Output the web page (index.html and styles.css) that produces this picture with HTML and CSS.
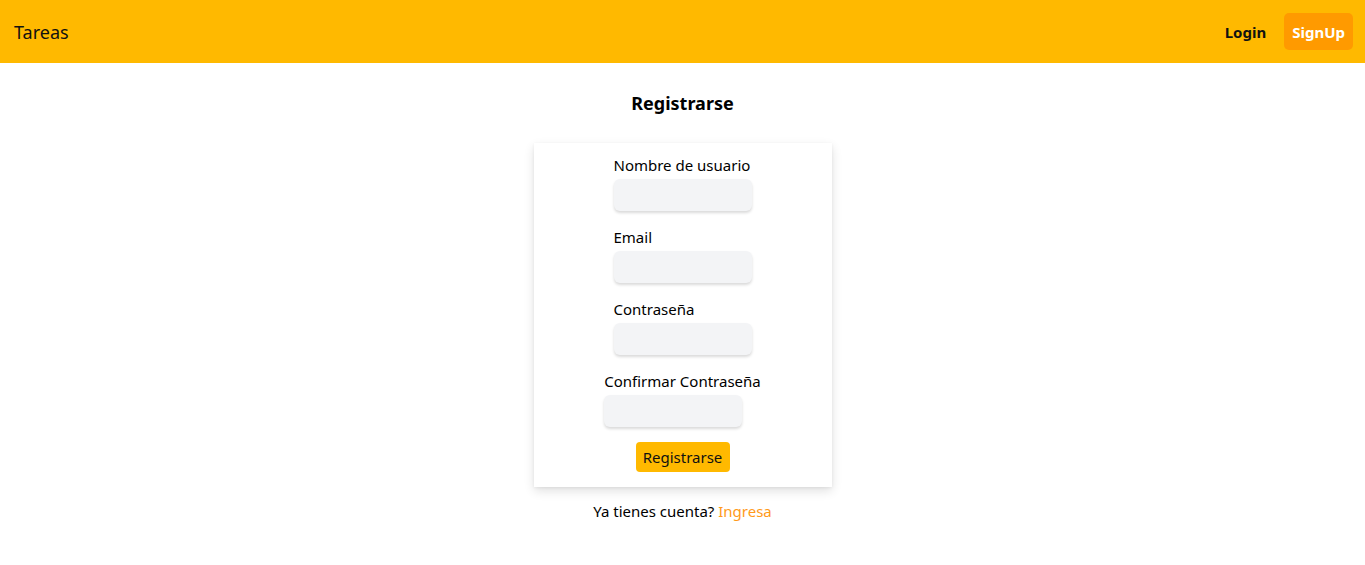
FILE: index.html
```html
<!DOCTYPE html>
<html lang="es">
<head>
<meta charset="utf-8">
<title>Tareas</title>
<link rel="stylesheet" href="styles.css">
</head>
<body>
<header class="navbar">
  <a class="brand" href="#">Tareas</a>
  <nav class="nav">
    <a class="nav-link" href="#">Login</a>
    <a class="nav-btn" href="#">SignUp</a>
  </nav>
</header>
<main class="main">
  <h1 class="title">Registrarse</h1>
  <form class="card">
    <div class="field">
      <label class="label">Nombre de usuario</label>
      <input class="input" type="text">
    </div>
    <div class="field">
      <label class="label">Email</label>
      <input class="input" type="email">
    </div>
    <div class="field">
      <label class="label">Contraseña</label>
      <input class="input" type="password">
    </div>
    <div class="field">
      <label class="label">Confirmar Contraseña</label>
      <input class="input" type="password">
    </div>
    <button class="submit" type="button">Registrarse</button>
  </form>
  <p class="footer-text">Ya tienes cuenta? <a class="link" href="#">Ingresa</a></p>
</main>
</body>
</html>
```
FILE: styles.css
```css
* { box-sizing: border-box; }
html, body { margin: 0; padding: 0; }
body {
  font-family: "Noto Sans", "Open Sans", sans-serif;
  font-size: 15px;
  color: #000;
  background: #fff;
}
a { text-decoration: none; color: inherit; }
.navbar {
  height: 63px;
  background: #ffb900;
  display: flex;
  align-items: center;
  justify-content: space-between;
  padding: 0 12px 0 14px;
}
.brand { font-size: 18px; color: #111; }
.nav { display: flex; align-items: center; gap: 18px; }
.nav-link { font-weight: 700; font-size: 15px; color: #111; }
.nav-btn {
  font-weight: 700;
  font-size: 15px;
  color: #fff;
  background: #ff9a00;
  border-radius: 5px;
  height: 37px;
  padding: 0 8px;
  display: flex;
  align-items: center;
}
.main { display: flex; flex-direction: column; align-items: center; }
.title {
  font-size: 18px;
  font-weight: 700;
  margin: 27px 0 27px;
  line-height: 26px;
}
.card {
  width: 298px;
  background: #fff;
  box-shadow: 0 4px 10px rgba(0,0,0,0.12), 0 1px 3px rgba(0,0,0,0.06);
  padding: 12px 16px 15px;
  display: flex;
  flex-direction: column;
  align-items: center;
}
.field {
  display: flex;
  flex-direction: column;
  align-items: flex-start;
  margin-bottom: 16px;
}
.label { line-height: 20px; height: 20px; margin-bottom: 4px; }
.input {
  width: 138px;
  height: 32px;
  border: none;
  border-radius: 6px;
  background: #f3f4f6;
  box-shadow: 0 2px 3px rgba(0,0,0,0.15);
  outline: none;
  font: inherit;
}
.submit {
  margin-top: -1px;
  width: 94px;
  height: 30px;
  border: none;
  border-radius: 4px;
  background: #ffb900;
  font: inherit;
  font-size: 15px;
  color: #111;
  padding: 0;
}
.footer-text { margin: 12px 0 0; line-height: 24px; }
.link { color: #ff9a1a; }
```
